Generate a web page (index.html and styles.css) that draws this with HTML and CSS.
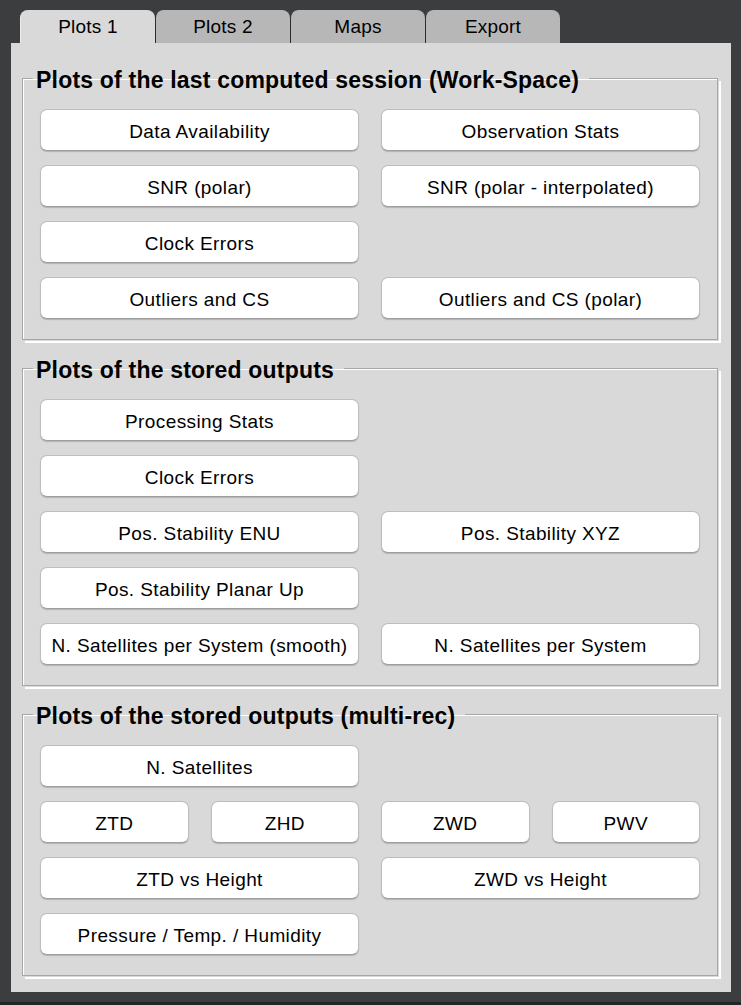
FILE: index.html
```html
<!DOCTYPE html>
<html lang="en">
<head>
<meta charset="utf-8">
<title>Plots</title>
<link rel="stylesheet" href="styles.css">
</head>
<body>
<div class="window">
  <div class="tabs">
    <div class="tab active">Plots 1</div>
    <div class="tab">Plots 2</div>
    <div class="tab">Maps</div>
    <div class="tab">Export</div>
  </div>
  <div class="panel">
    <fieldset class="group">
      <legend>Plots of the last computed session (Work-Space)</legend>
      <div class="grid">
        <button class="btn left">Data Availability</button>
        <button class="btn right">Observation Stats</button>
        <button class="btn left">SNR (polar)</button>
        <button class="btn right">SNR (polar - interpolated)</button>
        <button class="btn left">Clock Errors</button>
        <button class="btn left">Outliers and CS</button>
        <button class="btn right">Outliers and CS (polar)</button>
      </div>
    </fieldset>
    <fieldset class="group">
      <legend>Plots of the stored outputs</legend>
      <div class="grid">
        <button class="btn left">Processing Stats</button>
        <button class="btn left">Clock Errors</button>
        <button class="btn left">Pos. Stability ENU</button>
        <button class="btn right">Pos. Stability XYZ</button>
        <button class="btn left">Pos. Stability Planar Up</button>
        <button class="btn left">N. Satellites per System (smooth)</button>
        <button class="btn right">N. Satellites per System</button>
      </div>
    </fieldset>
    <fieldset class="group">
      <legend>Plots of the stored outputs (multi-rec)</legend>
      <div class="grid">
        <button class="btn left">N. Satellites</button>
        <button class="btn c1">ZTD</button>
        <button class="btn">ZHD</button>
        <button class="btn">ZWD</button>
        <button class="btn">PWV</button>
        <button class="btn left">ZTD vs Height</button>
        <button class="btn right">ZWD vs Height</button>
        <button class="btn left">Pressure / Temp. / Humidity</button>
      </div>
    </fieldset>
  </div>
</div>
</body>
</html>
```

FILE: styles.css
```css
html, body {
  margin: 0;
  padding: 0;
  background: #3c3d3f;
}

body {
  font-family: "Liberation Sans", Arial, sans-serif;
  color: #000;
  overflow: hidden;
}

.window {
  width: 741px;
  height: 1005px;
  box-sizing: border-box;
  padding: 10px 0 0 11px;
  border-bottom: 3px solid #232426;
}

.tabs {
  display: flex;
  margin-left: 9px;
  height: 33px;
}

.tab {
  width: 135px;
  height: 33px;
  box-sizing: border-box;
  background: #b7b7b7;
  border-left: 1px solid #2b2b2b;
  border-top-left-radius: 8px;
  border-top-right-radius: 8px;
  font-size: 19px;
  line-height: 34px;
  text-align: center;
  letter-spacing: 0.2px;
}

.tab.active {
  background: #d9d9d9;
  border-left: 1px solid #ececec;
}

.panel {
  width: 720px;
  height: 949px;
  box-sizing: border-box;
  background: #d9d9d9;
  padding: 21px 13px 0 11px;
}

.group {
  margin: 0;
  min-width: 0;
  padding: 17px 18px 20px 18px;
  border: 1px solid #a7a7a7;
  box-shadow: inset 1px 1px 0 #fff, 1px 1px 0 #d9d9d9, 3px 3px 0 #fff;
}

.group + .group {
  margin-top: 14px;
}

.group legend {
  font-weight: bold;
  font-size: 23px;
  line-height: 24px;
  letter-spacing: 0.2px;
  padding: 4px 10px 0 3px;
  margin-left: -8px;
  color: #000;
}

.grid {
  display: grid;
  grid-template-columns: repeat(4, 1fr);
  column-gap: 22px;
  row-gap: 14px;
  margin: 0 -1px;
}

.btn {
  height: 42px;
  margin: 0;
  padding: 3px 0 0 0;
  background: #fff;
  border: 1px solid #bdbdbd;
  border-bottom-color: #9e9e9e;
  border-radius: 7px;
  box-shadow: 0 1px 1px rgba(0, 0, 0, 0.18);
  font-family: "Liberation Sans", Arial, sans-serif;
  font-size: 19px;
  letter-spacing: 0.4px;
  color: #000;
  text-align: center;
}

.btn.left {
  grid-column: 1 / span 2;
}

.btn.right {
  grid-column: 3 / span 2;
}

.btn.c1 {
  grid-column: 1;
}
```
